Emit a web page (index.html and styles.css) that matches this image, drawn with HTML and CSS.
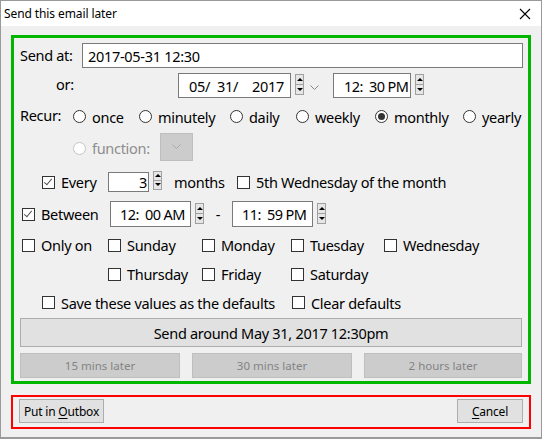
FILE: index.html
```html
<!DOCTYPE html>
<html>
<head>
<meta charset="utf-8">
<link rel="stylesheet" href="styles.css">
</head>
<body>
<div class="window">
  <div class="titlebar">
    <span class="title">Send this email later</span>
    <svg class="close" width="12" height="12" viewBox="0 0 12 12"><path d="M1 1L11 11M11 1L1 11" stroke="#000" stroke-width="1.1"/></svg>
  </div>
  <div class="body">
    <div class="green">
      <div class="row r1">
        <span class="lbl-send">Send at:</span>
        <div class="field main-input">2017-05-31 12:30</div>
      </div>
      <div class="row r2">
        <span class="lbl-or">or:</span>
        <div class="field date-box"><span class="pre">05/  31/    2017</span></div>
        <span class="spin"><i class="up"></i><i class="down"></i></span>
        <svg class="chev" width="9" height="6" viewBox="0 0 9 6"><path d="M0.5 0.5L4.5 4.5L8.5 0.5" fill="none" stroke="#888" stroke-width="1"/></svg>
        <div class="field time-box"><span class="pre">12:  30 PM</span></div>
        <span class="spin"><i class="up"></i><i class="down"></i></span>
      </div>
      <div class="row r3">
        <span class="lbl-recur">Recur:</span>
        <label class="radio w-once"><span class="rb"></span><span>once</span></label>
        <label class="radio w-minutely"><span class="rb"></span><span>minutely</span></label>
        <label class="radio w-daily"><span class="rb"></span><span>daily</span></label>
        <label class="radio w-weekly"><span class="rb"></span><span>weekly</span></label>
        <label class="radio w-monthly"><span class="rb on"></span><span>monthly</span></label>
        <label class="radio"><span class="rb"></span><span>yearly</span></label>
      </div>
      <div class="row r4">
        <label class="radio disabled w-function"><span class="rb"></span><span>function:</span></label>
        <div class="dd-disabled"><svg width="9" height="6" viewBox="0 0 9 6"><path d="M0.5 0.5L4.5 4.5L8.5 0.5" fill="none" stroke="#aaa" stroke-width="1"/></svg></div>
      </div>
      <div class="row r5">
        <label class="check w-every"><span class="cb on"></span><span>Every</span></label>
        <div class="field num-box">3</div>
        <span class="spin small"><i class="up"></i><i class="down"></i></span>
        <span class="months">months</span>
        <label class="check"><span class="cb"></span><span>5th Wednesday of the month</span></label>
      </div>
      <div class="row r6">
        <label class="check w-between"><span class="cb on"></span><span>Between</span></label>
        <div class="field t-box"><span class="pre">12:  00 AM</span></div>
        <span class="spin"><i class="up"></i><i class="down"></i></span>
        <span class="dash">-</span>
        <div class="field t-box"><span class="pre">11:  59 PM</span></div>
        <span class="spin"><i class="up"></i><i class="down"></i></span>
      </div>
      <div class="days">
        <label class="check"><span class="cb"></span><span>Only on</span></label>
        <label class="check"><span class="cb"></span><span>Sunday</span></label>
        <label class="check"><span class="cb"></span><span>Monday</span></label>
        <label class="check"><span class="cb"></span><span>Tuesday</span></label>
        <label class="check"><span class="cb"></span><span>Wednesday</span></label>
        <span></span>
        <label class="check"><span class="cb"></span><span>Thursday</span></label>
        <label class="check"><span class="cb"></span><span>Friday</span></label>
        <label class="check"><span class="cb"></span><span>Saturday</span></label>
        <span></span>
      </div>
      <div class="row r9">
        <label class="check w-save"><span class="cb"></span><span>Save these values as the defaults</span></label>
        <label class="check"><span class="cb"></span><span>Clear defaults</span></label>
      </div>
      <div class="btn big">Send around May 31, 2017 12:30pm</div>
      <div class="later">
        <div class="btn dis">15 mins later</div>
        <div class="btn dis">30 mins later</div>
        <div class="btn dis">2 hours later</div>
      </div>
    </div>
    <div class="red">
      <div class="btn act outbox"><span>Put in <u>O</u>utbox</span></div>
      <div class="btn act cancel"><span><u>C</u>ancel</span></div>
    </div>
  </div>
</div>
</body>
</html>
```
FILE: styles.css
```css
html, body {
  margin: 0;
  padding: 0;
  background: #f0f0f0;
}
.window {
  width: 542px;
  height: 439px;
  box-sizing: border-box;
  border: 1px solid #9a9a9a;
  border-bottom-width: 2px;
  background: #f0f0f0;
  font-family: "Noto Sans", sans-serif;
  font-size: 14.5px;
  letter-spacing: -0.3px;
  color: #000;
  display: flex;
  flex-direction: column;
}
.titlebar {
  height: 25px;
  background: #fff;
  display: flex;
  align-items: center;
  justify-content: space-between;
  padding: 0 10px 0 3px;
  flex: none;
}
.title {
  font-size: 12px;
  letter-spacing: -0.1px;
}
.body {
  padding: 9px 10px 0 10px;
}
.green {
  border: 3px solid #00b700;
  height: 349px;
  box-sizing: border-box;
  display: flex;
  flex-direction: column;
}
.row {
  display: flex;
  align-items: center;
  flex: none;
}
.pre { white-space: pre; }
.field {
  background: #fff;
  border: 1px solid #7a7a7a;
  box-sizing: border-box;
  display: flex;
  align-items: center;
}
.r1 { margin-top: 5px; height: 25px; padding-left: 6px; }
.lbl-send { width: 62px; position: relative; top: -1px; }
.main-input { width: 441px; height: 25px; padding-left: 5px; }
.r2 { margin-top: 5px; height: 25px; padding-left: 42px; }
.lbl-or { width: 122px; position: relative; top: -2px; }
.date-box { width: 113px; height: 25px; padding-left: 10px; }
.time-box { width: 78px; height: 25px; padding-left: 10px; letter-spacing: -0.6px; }
.spin {
  width: 9px;
  height: 21px;
  margin-left: 4px;
  display: flex;
  flex-direction: column;
  align-self: flex-start;
  margin-top: 1px;
}
.spin i {
  flex: 1;
  background: #e6e6e6;
  border: 1px solid #a0a0a0;
  position: relative;
}
.spin i + i { border-top: none; }
.spin i::after {
  content: "";
  position: absolute;
  left: 1px;
  width: 0;
  height: 0;
  border-left: 3px solid transparent;
  border-right: 3px solid transparent;
}
.spin .up::after { top: 3px; border-bottom: 3px solid #000; }
.spin .down::after { top: 3px; border-top: 3px solid #000; }
.spin.small { height: 19px; margin-top: 1px; }
.spin.small i::after { top: 2px; }
.chev { margin-left: 6px; margin-right: 14px; margin-top: 4px; }
.r3 { margin-top: 5px; height: 27px; padding-left: 6px; }
.lbl-recur { width: 53px; position: relative; top: -2px; }
.radio, .check {
  display: flex;
  align-items: center;
  white-space: nowrap;
}
.rb {
  width: 13px;
  height: 13px;
  box-sizing: border-box;
  border: 1px solid #333;
  border-radius: 50%;
  background: #fff;
  margin-right: 6px;
  position: relative;
  flex: none;
}
.rb.on::after {
  content: "";
  position: absolute;
  left: 2px;
  top: 2px;
  width: 7px;
  height: 7px;
  border-radius: 50%;
  background: #333;
}
.w-once { width: 66px; }
.w-minutely { width: 91px; }
.w-daily { width: 66px; }
.w-weekly { width: 79px; }
.w-monthly { width: 88px; }
.r4 { margin-top: 3px; height: 28px; padding-left: 59px; }
.disabled { color: #8d8d8d; }
.disabled .rb { border-color: #c5c5c5; background: #fff; }
.w-function { width: 87px; position: relative; top: 1px; }
.dd-disabled {
  width: 33px;
  height: 28px;
  box-sizing: border-box;
  background: #cccccc;
  border: 1px solid #bfbfbf;
  display: flex;
  align-items: center;
  justify-content: center;
}
.cb {
  width: 13px;
  height: 13px;
  box-sizing: border-box;
  border: 1px solid #333;
  background: #fff;
  margin-right: 6px;
  position: relative;
  flex: none;
}
.cb.on::after {
  content: "";
  position: absolute;
  left: 3px;
  top: 0px;
  width: 3px;
  height: 7px;
  border-right: 1px solid #555;
  border-bottom: 1px solid #555;
  transform: rotate(40deg);
}
.r5 { margin-top: 9px; height: 24px; padding-left: 28px; }
.w-every { width: 66px; }
.num-box { width: 41px; height: 20px; justify-content: flex-end; padding-right: 1px; }
.months { margin-left: 12px; width: 63px; }
.r6 { margin-top: 6px; height: 28px; padding-left: 8px; }
.w-between { width: 88px; }
.t-box { width: 81px; height: 26px; padding-left: 9px; letter-spacing: -0.6px; }
.r6 .spin { height: 21px; margin-top: 3px; }
.dash { width: 24px; text-align: center; margin-left: 2px; margin-right: 2px; }
.days {
  margin-top: 4px;
  padding-left: 8px;
  display: grid;
  grid-template-columns: 86px 94px 89px 93px auto;
  grid-auto-rows: 26px;
  row-gap: 3px;
  align-items: center;
  flex: none;
}
.r9 { margin-top: 2px; height: 27px; padding-left: 28px; }
.w-save { width: 250px; }
.btn {
  box-sizing: border-box;
  display: flex;
  align-items: center;
  justify-content: center;
  white-space: nowrap;
}
.big {
  margin: 2px 6px 0 6px;
  height: 29px;
  background: #e1e1e1;
  border: 1px solid #adadad;
  flex: none;
}
.later {
  margin: 6px 6px 0 6px;
  display: grid;
  grid-template-columns: 160px 160px 158px;
  column-gap: 12px;
  flex: none;
}
.dis {
  height: 25px;
  background: #cccccc;
  border: 1px solid #bfbfbf;
  color: #838383;
  font-size: 11.5px;
  letter-spacing: 0;
}
.red {
  margin-top: 11px;
  height: 34px;
  box-sizing: border-box;
  border: 2px solid #ff0000;
  padding: 2px 6px 0 6px;
  display: flex;
  justify-content: space-between;
  align-items: flex-start;
}
.act {
  height: 24px;
  background: #e1e1e1;
  border: 1px solid #adadad;
  font-size: 12px;
  letter-spacing: -0.2px;
}
.outbox { width: 85px; }
.cancel { width: 66px; }
u { text-decoration-thickness: 1px; text-underline-offset: 2px; }
```
